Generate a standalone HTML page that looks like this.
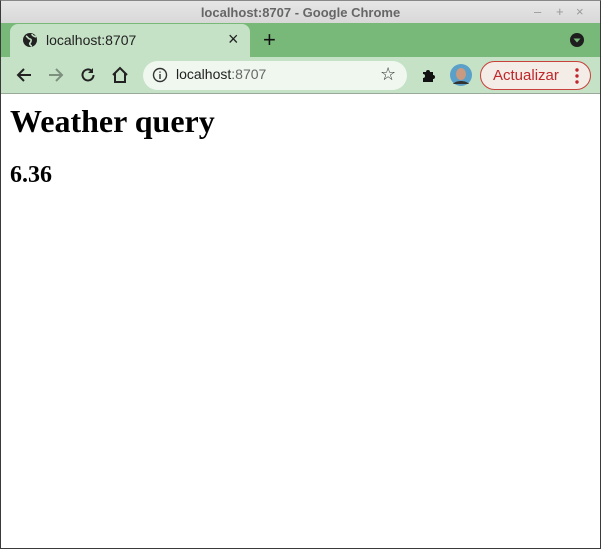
<!DOCTYPE html>
<html><head><meta charset="utf-8"><style>
*{margin:0;padding:0;box-sizing:border-box}
body{width:601px;height:549px;overflow:hidden;background:#fff;position:relative;font-family:"Liberation Sans","DejaVu Sans",sans-serif}
.frame{position:absolute;left:0;top:0;width:601px;height:549px;border:1px solid #3a3a3a;border-top-color:#888}
.title{position:absolute;left:1px;top:1px;width:599px;height:22px;background:linear-gradient(#e6e6e6,#d8d8d8);text-align:center;font-size:13px;font-weight:bold;color:#666;line-height:24px}
.wc{position:absolute;top:0;font-size:13px;color:#999;line-height:24px}
.strip{position:absolute;left:1px;top:23px;width:599px;height:34px;background:#78b97a}
.tab{position:absolute;left:10px;top:24px;width:240px;height:34px;background:#c5e2c6;border-radius:8px 8px 0 0}
.tb{position:absolute;left:1px;top:57px;width:599px;height:37px;background:#c5e2c6;border-bottom:1px solid #9aaa9a}
.omni{position:absolute;left:143px;top:61px;width:264px;height:29px;background:#eff7ef;border-radius:15px}
.upd{position:absolute;left:480px;top:61px;width:111px;height:29px;border:1px solid #c8413b;border-radius:15px;background:#f3ece7;color:#c0262a;font-size:15px;line-height:28px;padding-left:12px}
h1{position:absolute;left:10px;top:103px;font:bold 32px "Liberation Serif",serif;color:#000}
h2{position:absolute;left:10px;top:162px;font:bold 24px "Liberation Serif",serif;color:#000}
</style></head><body>
<div class="title">localhost:8707 - Google Chrome</div>
<div class="wc" style="left:534px">–</div><div class="wc" style="left:556px">+</div><div class="wc" style="left:576px">×</div>
<div class="strip"></div>
<div class="tab"></div>
<svg style="position:absolute;left:22px;top:32px" width="16" height="16" viewBox="0 0 16 16"><circle cx="8" cy="8" r="7" fill="#222"/><path d="M4 4c2 1 2 3 4 3s1 3 0 4 1 3 2 3M10 2c0 2 2 2 4 3" stroke="#c5e2c6" stroke-width="1.6" fill="none"/></svg>
<div style="position:absolute;left:46px;top:32px;font-size:14px;color:#222">localhost:8707</div>
<div style="position:absolute;left:228px;top:29px;font-size:18px;color:#222">×</div>
<div style="position:absolute;left:263px;top:27px;font-size:22px;color:#111">+</div>
<svg style="position:absolute;left:569px;top:32px" width="16" height="16"><circle cx="8" cy="8" r="7" fill="#1e1e1e"/><path d="M4.5 6.5h7L8 10.5z" fill="#78b97a"/></svg>
<div class="tb"></div>
<svg style="position:absolute;left:14px;top:65px" width="20" height="20" fill="none" stroke="#222" stroke-width="2"><path d="M17 10H4M10 4L4 10l6 6"/></svg>
<svg style="position:absolute;left:46px;top:65px" width="20" height="20" fill="none" stroke="#7d8f7d" stroke-width="2"><path d="M3 10h13M10 4l6 6-6 6"/></svg>
<svg style="position:absolute;left:78px;top:65px" width="20" height="20" fill="none" stroke="#222" stroke-width="2"><path d="M15.5 10a5.5 5.5 0 1 1-2-4.3"/><path d="M15 3v5h-5" fill="#222" stroke="none"/></svg>
<svg style="position:absolute;left:110px;top:65px" width="20" height="20" fill="none" stroke="#222" stroke-width="2"><path d="M3 10L10 3l7 7M5 8v9h10V8"/></svg>
<div class="omni"></div>
<svg style="position:absolute;left:152px;top:67px" width="16" height="16" fill="none" stroke="#333" stroke-width="1.4"><circle cx="8" cy="8" r="6.5"/><path d="M8 7v5M8 4.5v1.2"/></svg>
<div style="position:absolute;left:176px;top:66px;font-size:14px;color:#222">localhost<span style="color:#666">:8707</span></div>
<div style="position:absolute;left:380px;top:64px;font-size:18px;color:#333">☆</div>
<svg style="position:absolute;left:420px;top:66px" width="18" height="18" fill="#111"><path d="M3 6h3a2 2 0 1 1 4 0h3v3a2 2 0 1 1 0 4v3H3v-4a2 2 0 1 0 0-4z"/></svg>
<svg style="position:absolute;left:450px;top:64px" width="22" height="22"><circle cx="11" cy="11" r="11" fill="#5aa0c8"/><ellipse cx="11" cy="10" rx="5" ry="6" fill="#c99a80"/><path d="M3 20c3-4 13-4 16 0" fill="#333"/></svg>
<div class="upd">Actualizar</div>
<svg style="position:absolute;left:574px;top:67px" width="6" height="18" fill="#c0262a"><circle cx="3" cy="3" r="1.7"/><circle cx="3" cy="9" r="1.7"/><circle cx="3" cy="15" r="1.7"/></svg>
<h1>Weather query</h1>
<h2>6.36</h2>
<div class="frame"></div>
</body></html>
